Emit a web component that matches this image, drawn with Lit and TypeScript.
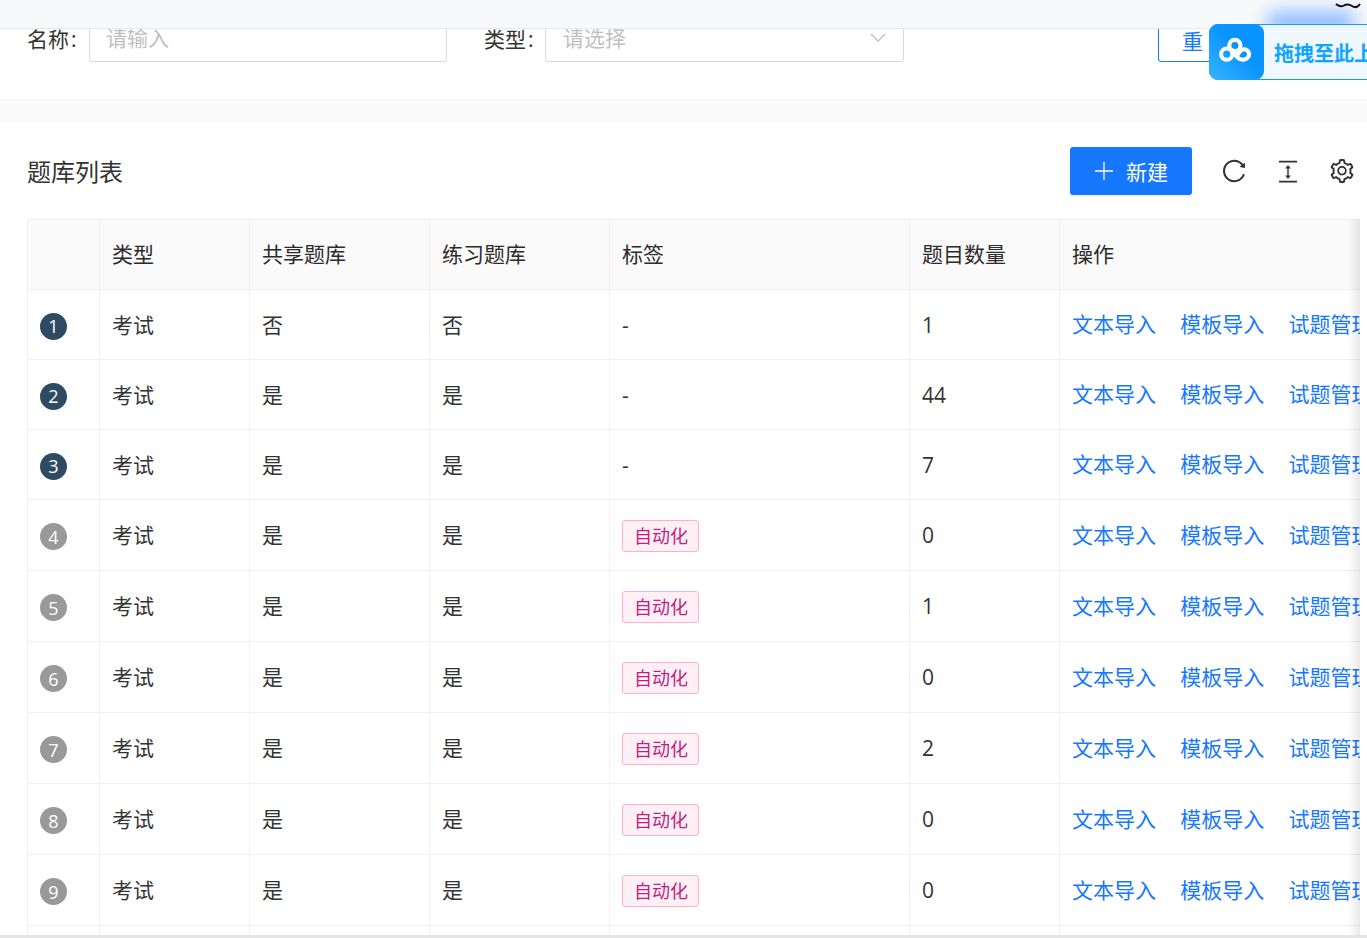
import { LitElement, css, html, svg } from 'lit'
import { customElement } from 'lit/decorators.js'

interface BankRow {
  no: number
  shared: string
  practice: string
  tag: string
  count: number
  height: number
}

const rows: BankRow[] = [
  { no: 1, shared: '否', practice: '否', tag: '', count: 1, height: 70 },
  { no: 2, shared: '是', practice: '是', tag: '', count: 44, height: 70 },
  { no: 3, shared: '是', practice: '是', tag: '', count: 7, height: 70 },
  { no: 4, shared: '是', practice: '是', tag: '自动化', count: 0, height: 71 },
  { no: 5, shared: '是', practice: '是', tag: '自动化', count: 1, height: 71 },
  { no: 6, shared: '是', practice: '是', tag: '自动化', count: 0, height: 71 },
  { no: 7, shared: '是', practice: '是', tag: '自动化', count: 2, height: 71 },
  { no: 8, shared: '是', practice: '是', tag: '自动化', count: 0, height: 71 },
  { no: 9, shared: '是', practice: '是', tag: '自动化', count: 0, height: 71 },
]

const reloadPath =
  'M909.1 209.3l-56.4 44.1C775.8 155.1 656.2 92 521.9 92 290 92 102.3 279.5 102 511.5 101.7 743.7 289.8 932 521.9 932c181.3 0 335.8-115 394.6-276.1 1.5-4.2-.7-8.9-4.9-10.3l-56.7-19.5a8 8 0 00-10.1 4.8c-1.8 5-3.8 10-5.9 14.9-17.3 41-42.1 77.8-73.7 109.4A344.77 344.77 0 01655.9 829c-42.3 17.9-87.4 27-133.8 27-46.5 0-91.5-9.1-133.8-27A341.5 341.5 0 01279 755.2a342.16 342.16 0 01-73.7-109.4c-17.9-42.4-27-87.4-27-133.9s9.1-91.5 27-133.9c17.3-41 42.1-77.8 73.7-109.4 31.6-31.6 68.4-56.4 109.3-73.8 42.3-17.9 87.4-27 133.8-27 46.5 0 91.5 9.1 133.8 27a341.5 341.5 0 01109.3 73.8c9.9 9.9 19.2 20.4 27.8 31.4l-60.2 47a8 8 0 003 14.1l175.6 43c5 1.2 9.9-2.6 9.9-7.7l.8-180.9c-.1-6.6-7.8-10.3-13-6.2z'

const settingPath =
  'M924.8 625.7l-65.5-56c3.1-19 4.7-38.4 4.7-57.8s-1.6-38.8-4.7-57.8l65.5-56a32.03 32.03 0 009.3-35.2l-.9-2.6a443.74 443.74 0 00-79.7-137.9l-1.8-2.1a32.12 32.12 0 00-35.1-9.5l-81.3 28.9c-30-24.6-63.5-44-99.7-57.6l-15.7-85a32.05 32.05 0 00-25.8-25.7l-2.7-.5c-52.1-9.4-106.9-9.4-159 0l-2.7.5a32.05 32.05 0 00-25.8 25.7l-15.8 85.4a351.86 351.86 0 00-99 57.4l-81.9-29.1a32 32 0 00-35.1 9.5l-1.8 2.1a446.02 446.02 0 00-79.7 137.9l-.9 2.6c-4.5 12.5-.8 26.5 9.3 35.2l66.3 56.6c-3.1 18.8-4.6 38-4.6 57.1 0 19.2 1.5 38.4 4.6 57.1L99 625.5a32.03 32.03 0 00-9.3 35.2l.9 2.6c18.1 50.4 44.9 96.9 79.7 137.9l1.8 2.1a32.12 32.12 0 0035.1 9.5l81.9-29.1c29.8 24.5 63.1 43.9 99 57.4l15.8 85.4a32.05 32.05 0 0025.8 25.7l2.7.5a449.4 449.4 0 00159 0l2.7-.5a32.05 32.05 0 0025.8-25.7l15.7-85a350 350 0 0099.7-57.6l81.3 28.9a32 32 0 0035.1-9.5l1.8-2.1c34.8-41.1 61.6-87.5 79.7-137.9l.9-2.6c4.5-12.3.8-26.3-9.3-35zM788.3 465.9c2.5 15.1 3.8 30.6 3.8 46.1s-1.3 31-3.8 46.1l-6.6 40.1 74.7 63.9a370.03 370.03 0 01-42.6 73.6L721 702.8l-31.4 25.8c-23.9 19.6-50.5 35-79.3 45.8l-38.1 14.3-17.9 97a377.5 377.5 0 01-85 0l-17.9-97.2-37.8-14.5c-28.5-10.8-55-26.2-78.7-45.7l-31.4-25.9-93.4 33.2c-17-22.9-31.2-47.6-42.6-73.6l75.5-64.5-6.5-40c-2.4-14.9-3.7-30.3-3.7-45.5 0-15.3 1.2-30.6 3.7-45.5l6.5-40-75.5-64.5c11.3-26.1 25.6-50.7 42.6-73.6l93.4 33.2 31.4-25.9c23.7-19.5 50.2-34.9 78.7-45.7l37.9-14.3 17.9-97.2c28.1-3.2 56.8-3.2 85 0l17.9 97 38.1 14.3c28.7 10.8 55.4 26.2 79.3 45.8l31.4 25.8 92.8-32.9c17 22.9 31.2 47.6 42.6 73.6L781.8 426l6.5 39.9zM512 326c-97.2 0-176 78.8-176 176s78.8 176 176 176 176-78.8 176-176-78.8-176-176-176zm79.2 255.2A111.6 111.6 0 01512 614c-29.9 0-58-11.7-79.2-32.8A111.6 111.6 0 01400 502c0-29.9 11.7-58 32.8-79.2C454 401.6 482.1 390 512 390c29.9 0 58 11.6 79.2 32.8A111.6 111.6 0 01624 502c0 29.9-11.7 58-32.8 79.2z'

@customElement('app-root')
export class AppRoot extends LitElement {
  render() {
    return html`
      <div class="page">
        <section class="filters">
          <label class="field-label name-label">名称<span class="colon">:</span></label>
          <div class="input">请输入</div>
          <label class="field-label type-label">类型<span class="colon">:</span></label>
          <div class="input select">
            请选择
            <svg class="chevron" viewBox="0 0 18 10" aria-hidden="true">
              <polyline points="1,1 9,9 17,1" fill="none" stroke="#bfbfbf" stroke-width="1.4" />
            </svg>
          </div>
          <button class="reset">重置</button>
        </section>

        <div class="strip"></div>

        <section class="list">
          <header class="list-head">
            <h2>题库列表</h2>
            <button class="create">
              <svg class="plus" viewBox="0 0 18 18" aria-hidden="true">
                <path d="M9 0v18M0 9h18" stroke="#fff" stroke-width="1.3" />
              </svg>
              新建
            </button>
            <div class="tools">
              ${this.icon(svg`<path d=${reloadPath} fill="#333" />`)}
              <svg class="tool" viewBox="0 0 24 24" aria-hidden="true">
                <path d="M3 2.700h18M3 22.700h18" fill="none" stroke="#333" stroke-width="1.800" />
                <path d="M12 8.500v9" fill="none" stroke="#333" stroke-width="1.400" />
                <path d="M12 6l2.800 3.500H9.200zM12 20l2.800-3.500H9.200z" fill="#333" />
              </svg>
              ${this.icon(svg`<path d=${settingPath} fill="#333" />`)}
            </div>
          </header>

          <div class="table-wrap">
            <table>
              <colgroup>
                <col style="width:72px" />
                <col style="width:150px" />
                <col style="width:180px" />
                <col style="width:180px" />
                <col style="width:300px" />
                <col style="width:150px" />
                <col style="width:420px" />
              </colgroup>
              <thead>
                <tr>
                  <th></th>
                  <th>类型</th>
                  <th>共享题库</th>
                  <th>练习题库</th>
                  <th>标签</th>
                  <th>题目数量</th>
                  <th>操作</th>
                </tr>
              </thead>
              <tbody>
                ${rows.map((row) => this.renderRow(row))}
                <tr><td></td><td></td><td></td><td></td><td></td><td></td><td></td></tr>
              </tbody>
            </table>
            <div class="fixed-shadow"></div>
          </div>
        </section>

        <div class="topbar"></div>
        <div class="glow"></div>
        <svg class="smile" viewBox="0 0 32 8" aria-hidden="true">
          <path d="M2 3c3 2.500 5.500 3 8 1.500s5-1.500 8 .5 6 1 8-2" fill="none" stroke="#111" stroke-width="2" />
        </svg>
        <aside class="drop">
          <div class="drop-logo">
            <svg viewBox="0 0 36 36" aria-hidden="true">
              <g fill="none" stroke="#fff" stroke-width="3.800">
                <circle cx="16.500" cy="11.500" r="5.200" />
                <circle cx="9" cy="19.500" r="5.200" />
                <path d="M13 15c2.500 3 4.500 6.500 7 8.500 3 2.200 7.500 1.200 9-1.500 1.700-3.200-.5-7-4-7-3.200 0-4.500 3-6 5" />
              </g>
            </svg>
          </div>
          <span class="drop-text">拖拽至此上传</span>
        </aside>
        <div class="bottom-edge"></div>
      </div>
    `
  }

  private icon(content: unknown) {
    return html`<svg class="tool" viewBox="64 64 896 896" aria-hidden="true">${content}</svg>`
  }

  private renderRow(row: BankRow) {
    return html`
      <tr style=${`height:${row.height}px`}>
        <td class="no-cell"><span class=${row.no < 4 ? 'no top' : 'no'}>${row.no}</span></td>
        <td>考试</td>
        <td>${row.shared}</td>
        <td>${row.practice}</td>
        <td class=${row.tag ? 'tag-cell' : 'num-cell'}>
          ${row.tag ? html`<span class="tag">${row.tag}</span>` : '-'}
        </td>
        <td class="num-cell">${row.count}</td>
        <td class="action-cell">
          <div class="actions">
            <a>文本导入</a>
            <a>模板导入</a>
            <a>试题管理</a>
          </div>
        </td>
      </tr>
    `
  }

  static styles = css`
    :host {
      display: block;
      height: 938px;
      overflow: hidden;
      background: #fff;
      color: #333;
      font-family: 'Open Sans', 'Noto Sans CJK SC', sans-serif;
      font-size: 21px;
    }

    .page {
      position: relative;
      height: 938px;
      overflow: hidden;
    }

    .topbar {
      position: absolute;
      top: 0;
      left: 0;
      right: 0;
      height: 28px;
      background: #f8f9fb;
      border-bottom: 1px solid #e8e8e8;
    }

    .filters {
      display: flex;
      align-items: flex-start;
      height: 99px;
      padding: 17px 0 0 27px;
      box-sizing: border-box;
    }

    .field-label {
      line-height: 45px;
      white-space: nowrap;
    }

    .colon {
      margin-left: 2px;
    }

    .name-label {
      width: 62px;
    }

    .type-label {
      width: 61px;
      margin-left: 37px;
    }

    .input {
      position: relative;
      width: 358px;
      height: 45px;
      box-sizing: border-box;
      padding-left: 16px;
      border: 1px solid #d9d9d9;
      border-radius: 3px;
      color: #bfbfbf;
      line-height: 41px;
    }

    .select {
      width: 359px;
      padding-left: 17px;
    }

    .chevron {
      position: absolute;
      right: 17px;
      top: 15px;
      width: 16px;
      height: 9px;
    }

    .reset {
      width: 102px;
      height: 45px;
      margin-left: 254px;
      padding: 0;
      flex: none;
      border: 1px solid #1677ff;
      border-radius: 3px;
      background: #fff;
      color: #1677ff;
      font: inherit;
      letter-spacing: 6px;
    }

    .strip {
      height: 24px;
      background: #fafafc;
    }

    .list {
      padding-top: 24px;
    }

    .list-head {
      display: flex;
      align-items: center;
      height: 48px;
      padding: 0 13px 0 27px;
    }

    h2 {
      flex: 1;
      margin: -2px 0 0;
      color: #333;
      font-size: 24px;
      font-weight: 400;
    }

    .create {
      display: flex;
      align-items: center;
      justify-content: center;
      gap: 13px;
      width: 122px;
      height: 48px;
      padding: 0 0 0 1px;
      border: 0;
      border-radius: 3px;
      background: #1677ff;
      box-shadow: 0 2px 0 rgba(0, 0, 0, 0.045);
      color: #fff;
      font: inherit;
    }

    .plus {
      width: 18px;
      height: 18px;
    }

    .tools {
      display: flex;
      gap: 30px;
      margin-left: 30px;
    }

    .tool {
      display: block;
      width: 24px;
      height: 24px;
    }

    .table-wrap {
      position: relative;
      width: 1333px;
      margin: 24px 0 0 27px;
      overflow: hidden;
    }

    table {
      width: 1452px;
      table-layout: fixed;
      border-collapse: separate;
      border-spacing: 0;
      border-top: 1px solid #f0f0f0;
      border-left: 1px solid #f0f0f0;
    }

    th,
    td {
      box-sizing: border-box;
      padding: 0 12px 2px;
      border-right: 1px solid #f0f0f0;
      border-bottom: 1px solid #f0f0f0;
      text-align: left;
      white-space: nowrap;
    }

    th {
      height: 70px;
      padding-bottom: 4px;
      background: #fafafa;
      color: #2b2b2b;
      font-weight: 400;
    }

    td {
      height: 70px;
    }

    .no-cell,
    .tag-cell,
    .num-cell,
    .action-cell {
      padding-bottom: 0;
    }

    .no-cell {
      padding-top: 3px;
    }

    .tag-cell {
      padding-top: 1px;
    }

    .action-cell {
      padding-bottom: 3px;
    }

    .no {
      display: flex;
      align-items: center;
      justify-content: center;
      width: 27px;
      height: 27px;
      border-radius: 50%;
      background: #999;
      color: #fff;
      font-size: 18px;
      line-height: 1;
    }

    .no.top {
      background: #2f4a63;
    }

    .tag {
      display: inline-block;
      box-sizing: border-box;
      width: 77px;
      height: 32px;
      padding: 0 11px;
      border: 1px solid #ffadd2;
      border-radius: 3px;
      background: #fff0f6;
      color: #c41d7f;
      font-size: 18px;
      line-height: 30px;
      vertical-align: middle;
      white-space: nowrap;
    }

    .actions {
      display: flex;
      gap: 24.300px;
      color: #1677ff;
    }

    .fixed-shadow {
      position: absolute;
      top: 0;
      right: 0;
      bottom: 0;
      width: 12px;
      background: linear-gradient(to right, rgba(0, 0, 0, 0), rgba(0, 0, 0, 0.09));
    }

    .glow {
      position: absolute;
      top: 12px;
      left: 1266px;
      width: 90px;
      height: 20px;
      border-radius: 10px;
      background: #86b6ff;
      filter: blur(9px);
    }

    .smile {
      position: absolute;
      top: 1px;
      left: 1334px;
      width: 32px;
      height: 8px;
    }

    .drop {
      position: absolute;
      top: 24px;
      left: 1209px;
      display: flex;
      align-items: center;
      gap: 10px;
      width: 200px;
      height: 56px;
      box-sizing: border-box;
      border: 1px solid #1a96ff;
      border-radius: 9px 0 0 9px;
      background: #eff8ff;
    }

    .drop-logo {
      display: flex;
      align-items: center;
      justify-content: center;
      flex: none;
      width: 55px;
      height: 56px;
      margin: -1px 0 -1px -1px;
      border-radius: 9px;
      background: linear-gradient(45deg, #36b4ff, #0a94ff 55%);
    }

    .drop-logo svg {
      width: 39px;
      height: 39px;
    }

    .drop-text {
      color: #0ea5ff;
      font-size: 20px;
      font-weight: 700;
      white-space: nowrap;
    }

    .bottom-edge {
      position: absolute;
      left: 0;
      right: 0;
      bottom: 0;
      height: 3px;
      background: #e4e4e4;
    }
  `
}
